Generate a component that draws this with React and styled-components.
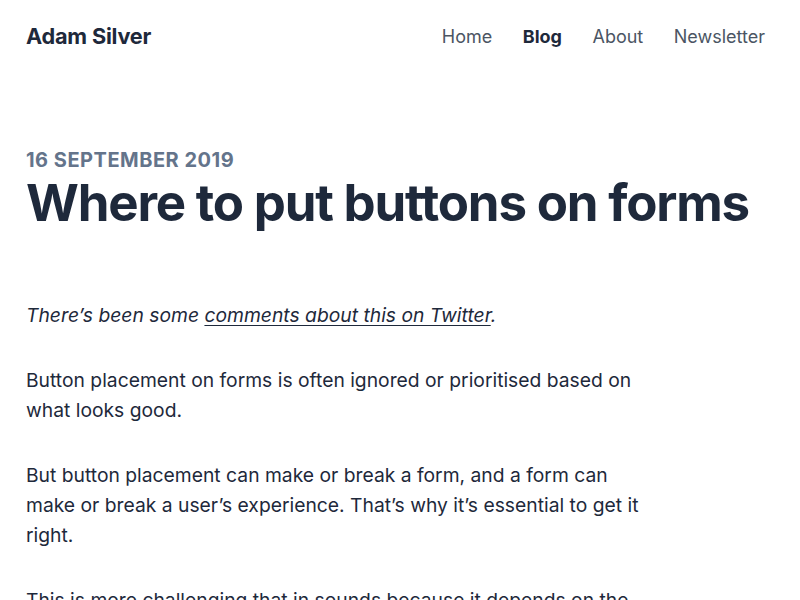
import styled, { createGlobalStyle } from "styled-components";

const GlobalStyle = createGlobalStyle`
    body {
        margin: 0;
        background: #fff;
        font-family: Inter, "Noto Sans", sans-serif;
        color: #1e293b;
    }
`;

const Page = styled.div`
    padding: 0 35px 0 26px;
`;

const Header = styled.header`
    height: 72px;
    display: flex;
    align-items: center;
    justify-content: space-between;
`;

const Logo = styled.a`
    font-size: 21.7px;
    font-weight: 700;
    color: #1e293b;
    text-decoration: none;
    letter-spacing: -0.2px;
`;

const Nav = styled.nav`
    display: flex;
    gap: 30.5px;
`;

const NavLink = styled.a`
    font-size: 18px;
    font-weight: ${(p) => (p.$current ? 700 : 400)};
    color: ${(p) => (p.$current ? "#1e293b" : "#4b5563")};
    text-decoration: none;
`;

const Article = styled.article`
    padding-top: 75px;
`;

const Date = styled.p`
    margin: 0;
    font-size: 20px;
    font-weight: 700;
    text-transform: uppercase;
    color: #64748b;
    letter-spacing: 0.5px;
    line-height: 26px;
`;

const Title = styled.h1`
    margin: 0 0 67px;
    font-size: 51px;
    font-weight: 700;
    letter-spacing: -1.2px;
    line-height: 60px;
    color: #1e293b;
    white-space: nowrap;
`;

const Body = styled.div`
    max-width: 625px;
`;

const Para = styled.p`
    margin: 0 0 35px;
    font-size: 19.3px;
    line-height: 30px;
    font-style: ${(p) => (p.$italic ? "italic" : "normal")};
    color: #1e293b;
`;

const TextLink = styled.a`
    color: #1e293b;
    text-decoration: underline;
    text-underline-offset: 3px;
`;

export default function App() {
    return (
        <>
            <GlobalStyle />
            <Page>
                <Header>
                    <Logo href="#">Adam Silver</Logo>
                    <Nav>
                        <NavLink href="#">Home</NavLink>
                        <NavLink href="#" $current>Blog</NavLink>
                        <NavLink href="#">About</NavLink>
                        <NavLink href="#">Newsletter</NavLink>
                    </Nav>
                </Header>
                <Article>
                    <Date>16 September 2019</Date>
                    <Title>Where to put buttons on forms</Title>
                    <Body>
                        <Para $italic>
                            There’s been some <TextLink href="#">comments about this on Twitter</TextLink>.
                        </Para>
                        <Para>
                            Button placement on forms is often ignored or prioritised based on what looks good.
                        </Para>
                        <Para>
                            But button placement can make or break a form, and a form can make or break a
                            user’s experience. That’s why it’s essential to get it right.
                        </Para>
                        <Para>
                            This is more challenging that in sounds because it depends on the type of form
                            and the buttons it has.
                        </Para>
                    </Body>
                </Article>
            </Page>
        </>
    );
}
